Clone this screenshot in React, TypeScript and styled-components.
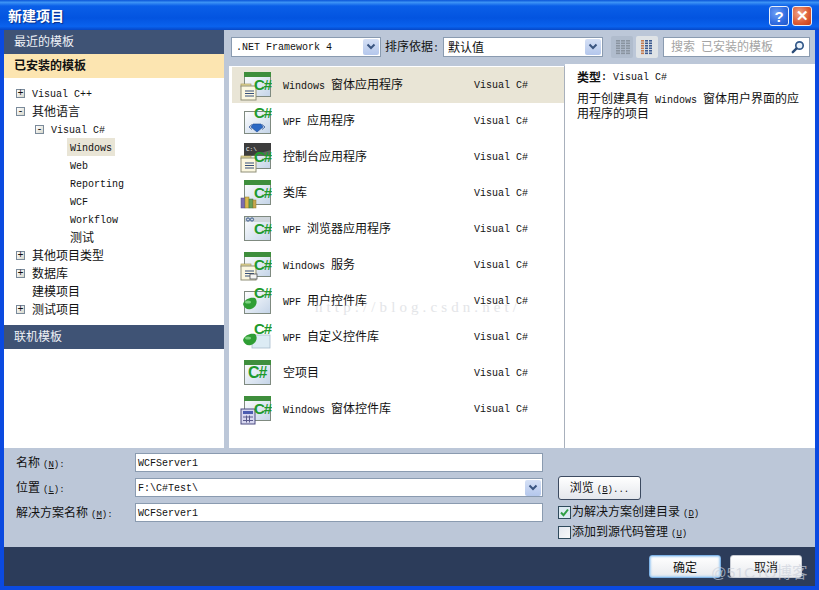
import {FC, ReactNode} from "react";
import styled, {createGlobalStyle} from "styled-components";

const Colors = {
  xpBlue: '#0a4fdc',
  panel: '#bcc7d8',
  header: '#3f5375',
  footer: '#2c3c5a',
  border: '#8a9bb0',
  selected: '#e9e5d6',
};

const GlobalStyle = createGlobalStyle`
  html, body {
    margin: 0;
    padding: 0;
    background: ${Colors.xpBlue};
  }
  * { box-sizing: border-box; }
`;

const Dialog = styled.div`
  position: relative;
  width: 819px;
  height: 590px;
  overflow: hidden;
  display: flex;
  flex-direction: column;
  color: #111;
  font-family: "Liberation Mono", "Noto Sans CJK SC", monospace;
  background: #0b4ae0;
`;

const TitleBar = styled.div`
  height: 30px;
  flex: none;
  display: flex;
  align-items: center;
  justify-content: space-between;
  padding: 2px 7px 0 8px;
  background: linear-gradient(180deg, #0a55d8 0%, #3c93f5 8%, #0a5fe8 20%, #0354e0 60%, #0a62ee 88%, #0547c8 100%);
`;

const TitleText = styled.div`
  margin-bottom: 2px;
  color: #fff;
  font: bold 14px "Noto Sans CJK SC", sans-serif;
  text-shadow: 1px 1px 1px #0b2f88;
`;

const CaptionButtons = styled.div`
  display: flex;
  gap: 3px;
`;

const CaptionButton = styled.div<{$close?: boolean}>`
  width: 20px;
  height: 20px;
  border: 1px solid #e8effa;
  border-radius: 3px;
  display: flex;
  align-items: center;
  justify-content: center;
  color: #fff;
  font: bold 15px "Liberation Sans", sans-serif;
  background: ${(props) => props.$close
    ? 'radial-gradient(circle at 35% 35%, #f0a58a, #dc5a32 60%, #c43c18)'
    : 'radial-gradient(circle at 35% 35%, #6fa0f5, #2f6be0 60%, #1f54c8)'};
`;

const Body = styled.div`
  flex: 1;
  display: flex;
  flex-direction: column;
  margin: 0 4px 4px;
  min-height: 0;
`;

const Columns = styled.div`
  height: 418px;
  flex: none;
  display: flex;
  background: ${Colors.panel};
`;

const LeftColumn = styled.div`
  width: 220px;
  flex: none;
  display: flex;
  flex-direction: column;
  background: #fff;
`;

const SectionHeader = styled.div<{$active?: boolean}>`
  height: 24px;
  flex: none;
  display: flex;
  align-items: center;
  padding: 0 0 2px 10px;
  font-size: 12px;
  font-weight: ${(props) => props.$active ? 'bold' : 'normal'};
  background: ${(props) => props.$active ? '#fce5b1' : Colors.header};
  color: ${(props) => props.$active ? '#111' : '#eef1f6'};
`;

const Tree = styled.div`
  height: 247px;
  flex: none;
  padding-top: 6px;
`;

const TreeRow = styled.div<{$indent: number}>`
  height: 18px;
  display: flex;
  align-items: center;
  padding-left: ${(props) => props.$indent}px;
`;

const Expander = styled.div`
  width: 9px;
  height: 9px;
  flex: none;
  margin-right: 7px;
  border: 1px solid #7a8a9a;
  background: linear-gradient(135deg, #fff, #d8d8cc);
  display: flex;
  align-items: center;
  justify-content: center;
  color: #111;
  font: 10px/7px "Liberation Mono", monospace;
`;

const Latin = styled.span`
  display: inline-block;
  padding-top: 2px;
  font-size: 10px;
  line-height: 12px;
  white-space: pre;
`;

const Cjk = styled.span`
  font-family: "Noto Sans CJK SC", sans-serif;
  font-size: 12px;
  line-height: 12px;
`;

const Key = styled.span`
  font-size: 9px;
  text-decoration: underline;
`;

const TreeLabel = styled.div<{$selected?: boolean}>`
  height: 18px;
  display: flex;
  align-items: center;
  padding: 0 3px;
  margin-left: -3px;
  background: ${(props) => props.$selected ? Colors.selected : 'transparent'};

  ${Latin} {
    padding-top: 4px;
  }
`;

const RightColumn = styled.div`
  flex: 1;
  display: flex;
  flex-direction: column;
  min-width: 0;
`;

const Toolbar = styled.div`
  height: 34px;
  flex: none;
  display: flex;
  align-items: center;
  padding: 0 5px 0 7px;
`;

const ComboBox = styled.div<{$width: number}>`
  width: ${(props) => props.$width}px;
  height: 20px;
  flex: none;
  display: flex;
  align-items: center;
  justify-content: space-between;
  padding: 0 1px 0 4px;
  background: #fff;
  border: 1px solid ${Colors.border};
`;

const ComboArrow = styled.div`
  width: 16px;
  height: 16px;
  flex: none;
  display: flex;
  align-items: center;
  justify-content: center;
  border-radius: 2px;
  background: linear-gradient(180deg, #d5e0f5, #b4c7ec);
`;

const ToolbarLabel = styled.div`
  margin: 0 4px;
  width: 54px;
  flex: none;
  white-space: nowrap;
`;

const ViewButton = styled.div<{$active?: boolean}>`
  width: 22px;
  height: 22px;
  flex: none;
  display: flex;
  align-items: center;
  justify-content: center;
  margin-left: ${(props) => props.$active ? 3 : 8}px;
  border-radius: 2px;
  background: ${(props) => props.$active ? '#dfe3e6' : '#b0bccd'};
`;

const SearchBox = styled.div`
  width: 147px;
  height: 20px;
  flex: none;
  margin-left: 5px;
  display: flex;
  align-items: center;
  justify-content: space-between;
  padding: 0 4px 0 7px;
  background: #fff;
  border: 1px solid ${Colors.border};
  color: #a4a4a4;
`;

const ContentRow = styled.div`
  flex: 1;
  display: flex;
  min-height: 0;
  padding-left: 5px;
`;

const TemplateList = styled.div`
  width: 336px;
  flex: none;
  margin-top: 2px;
  padding-top: 1px;
  background: #fff;
  border-right: 1px solid #a8b0bc;
`;

const TemplateRow = styled.div<{$selected?: boolean}>`
  height: 36px;
  display: flex;
  align-items: center;
  margin-left: 3px;
  padding-left: 8px;
  background: ${(props) => props.$selected ? Colors.selected : 'transparent'};
`;

const TemplateIcon = styled.svg`
  width: 32px;
  height: 32px;
  flex: none;
  margin-right: 11px;
`;

const TemplateName = styled.div`
  width: 191px;
  flex: none;
  white-space: nowrap;
`;

const DetailsPane = styled.div`
  flex: 1;
  background: #fff;
  padding: 5px 8px 0 12px;
  line-height: 12px;
`;

const DetailsType = styled.div`
  height: 16px;
  margin-bottom: 7px;
  display: flex;
  align-items: center;
  font-weight: bold;
`;

const DetailsLang = styled(Latin)`
  margin-left: 6px;
  font-weight: normal;
`;

const DetailsText = styled.div`
  line-height: 14px;
`;

const FormPanel = styled.div`
  height: 99px;
  flex: none;
  display: grid;
  grid-template-columns: 119px 408px 15px 1fr;
  grid-auto-rows: 25px;
  align-items: center;
  padding: 2px 0 0 12px;
  background: ${Colors.panel};
`;

const FormLabel = styled.div`
  white-space: nowrap;
`;

const TextField = styled.div`
  height: 19px;
  display: flex;
  align-items: center;
  justify-content: space-between;
  padding: 0 1px 0 2px;
  background: #fff;
  border: 1px solid ${Colors.border};
`;

const BrowseButton = styled.div`
  width: 83px;
  height: 24px;
  display: flex;
  align-items: center;
  justify-content: center;
  border: 1px solid #3c4a60;
  border-radius: 3px;
  background: linear-gradient(180deg, #fff, #e4e7ec);
`;

const CheckRow = styled.div`
  display: flex;
  align-items: center;
  gap: 1px;
  margin-top: -1px;
  white-space: nowrap;
`;

const CheckSecond = styled(CheckRow)`
  margin-top: -11px;
`;

const CheckBox = styled.div<{$checked?: boolean}>`
  width: 13px;
  height: 13px;
  flex: none;
  display: flex;
  align-items: center;
  justify-content: center;
  border: 1px solid #2f4a5c;
  background: ${(props) => props.$checked ? '#dceaf2' : 'linear-gradient(135deg, #e4e8f0, #f8f8f8)'};
`;

const Footer = styled.div`
  height: 39px;
  flex: none;
  display: flex;
  align-items: center;
  justify-content: flex-end;
  gap: 9px;
  padding-right: 13px;
  background: ${Colors.footer};
`;

const FooterButton = styled.div<{$primary?: boolean}>`
  width: 72px;
  height: 23px;
  display: flex;
  align-items: center;
  justify-content: center;
  border-radius: 3px;
  background: linear-gradient(180deg, #fff, #e8eaee);
  border: 1px solid ${(props) => props.$primary ? '#7fb4e8' : '#c8ccd4'};
  box-shadow: ${(props) => props.$primary ? 'inset 0 0 2px 1px #a8d0f4' : 'none'};
`;

const WatermarkBlog = styled.div`
  position: absolute;
  left: 315px;
  top: 299px;
  color: #c9ccd2;
  opacity: 0.5;
  font: 15px "Liberation Serif", serif;
  letter-spacing: 4.1px;
  pointer-events: none;
`;

const WatermarkLogo = styled.div`
  position: absolute;
  left: 711px;
  top: 560px;
  color: rgba(205, 210, 220, 0.7);
  font: 15.5px "Liberation Sans", "Noto Sans CJK SC", sans-serif;
  pointer-events: none;
`;

const HotkeyHint = styled.span`
  margin-left: 3px;
  font-size: 9px;
`;

// Latin runs are narrower than the CJK ones, as with a bitmap SimSun
const Txt: FC<{children: string}> = ({children}) => (
  <>
    {children.split(/([\u2E80-\u9FFF\uFF00-\uFFEF]+)/).map((part, i) =>
      i % 2 ? <Cjk key={i}>{part}</Cjk> : part && <Latin key={i}>{part}</Latin>
    )}
  </>
);

const Hotkey: FC<{label: string; hotkey: string; tail?: string}> = ({label, hotkey, tail}) => (
  <>
    <Txt>{label}</Txt>
    <HotkeyHint>(<Key>{hotkey}</Key>){tail}</HotkeyHint>
  </>
);

const Chevron: FC = () => (
  <svg width="10" height="8" viewBox="0 0 10 8">
    <path d="M1.5 1.5 L5 5 L8.5 1.5" fill="none" stroke="#3a5580" strokeWidth="2" />
  </svg>
);

type IconKind = 'forms' | 'wpf' | 'console' | 'lib' | 'browser' | 'service' | 'control' | 'custom' | 'empty' | 'calc';

const SmallDoc: FC = () => (
  <g>
    <rect x="1" y="15" width="10" height="3" fill="#e8dc98" stroke="#a89c60" strokeWidth="0.7" />
    <rect x="1" y="17" width="15" height="14" fill="#fbf7df" stroke="#8f8f78" strokeWidth="1" />
    <path d="M5 22h9M5 24.5h9M5 27h9" stroke="#36507c" strokeWidth="1.2" />
  </g>
);

const IconArt: FC<{kind: IconKind}> = ({kind}) => {
  const framed = kind !== 'custom';
  const greenTitle = kind === 'forms' || kind === 'lib' || kind === 'service' || kind === 'empty' || kind === 'calc';
  const highText = kind === 'wpf' || kind === 'control' || kind === 'custom';
  return (
    <TemplateIcon viewBox="0 0 32 32">
      <defs>
        <linearGradient id="winFill" x1="0" y1="0" x2="1" y2="1">
          <stop offset="0" stopColor="#ffffff" />
          <stop offset="1" stopColor="#c4d4e8" />
        </linearGradient>
      </defs>
      {framed && (
        <rect x="4.5" y={kind === 'wpf' || kind === 'control' ? 6.5 : 3.5} width="26" height={kind === 'wpf' || kind === 'control' ? 22 : 24}
          fill="url(#winFill)" stroke="#7f8a80" strokeWidth="1" />
      )}
      {greenTitle && <rect x="4" y="3" width="27" height="5" fill="#3e8e3c" />}
      {kind === 'console' && (
        <>
          <rect x="4" y="2" width="27" height="13" fill="#3c3c3c" />
          <path d="M10 15 L31 9 V15 Z" fill="#606860" />
          <text x="6" y="10" fontSize="6" fill="#fff" fontFamily="Liberation Mono">C:\</text>
          <SmallDoc />
        </>
      )}
      {kind === 'browser' && (
        <>
          <rect x="5" y="4" width="25" height="5" fill="#cfd6dc" />
          <circle cx="8" cy="6.5" r="1.6" fill="none" stroke="#3a5a8c" />
          <circle cx="12" cy="6.5" r="1.6" fill="none" stroke="#3a5a8c" />
        </>
      )}
      {kind === 'forms' && <SmallDoc />}
      {kind === 'service' && (
        <>
          <SmallDoc />
          <rect x="10" y="25" width="7" height="5" fill="#f4f4f4" stroke="#555" strokeWidth="0.8" />
        </>
      )}
      {kind === 'lib' && (
        <>
          <rect x="1" y="21" width="4" height="10" fill="#7a6cb0" stroke="#50447c" strokeWidth="0.5" />
          <rect x="5" y="20" width="4" height="11" fill="#d8b84c" stroke="#8f7828" strokeWidth="0.5" />
          <rect x="9" y="22" width="4" height="9" fill="#68a058" stroke="#3f7038" strokeWidth="0.5" />
          <rect x="13" y="23" width="3" height="8" fill="#c8a850" stroke="#8f7828" strokeWidth="0.5" />
        </>
      )}
      {kind === 'wpf' && (
        <>
          <path d="M9 22 L12 19.5 M9 22 L12 24.5 M25 22 L22 19.5 M25 22 L22 24.5" stroke="#5070a8" strokeWidth="1" fill="none" />
          <path d="M13 19 h8 l2 3 -6 5 -6 -5 z" fill="#2a68c4" stroke="#1c4a94" strokeWidth="0.6" />
        </>
      )}
      {(kind === 'control' || kind === 'custom') && (
        <>
          {kind === 'custom' && <rect x="12" y="14" width="18" height="13" fill="#dcebf4" stroke="#a8bccc" strokeWidth="0.8" />}
          <path d="M3 19 C5 14 10 12 15 13 C18 16 17 22 11 24 C7 25 4 23 3 19 Z" fill="#2f9e34" />
          <ellipse cx="8" cy="17" rx="3" ry="1.6" fill="#7cd080" />
        </>
      )}
      {kind === 'calc' && (
        <>
          <rect x="1" y="16" width="14" height="15" fill="#d8d8f0" stroke="#4a4a80" strokeWidth="1" />
          <rect x="3" y="18" width="10" height="3" fill="#4c5cb0" />
          <path d="M3 24h10M3 27.5h10M6.5 22.5v7M9.5 22.5v7" stroke="#5a5a8c" strokeWidth="1" />
        </>
      )}
      <text x={kind === 'empty' ? 8 : 14} y={highText ? 13 : 21}
        fontSize={kind === 'empty' ? 16 : 15} fontWeight="bold" letterSpacing="-1"
        fill="#1e9a2c" fontFamily="Liberation Sans">C#</text>
    </TemplateIcon>
  );
};

const Magnifier: FC = () => (
  <svg width="14" height="14" viewBox="0 0 14 14">
    <circle cx="8.5" cy="5.5" r="3.7" fill="#eaf2fa" stroke="#33598a" strokeWidth="1.7" />
    <path d="M5.6 8.4 L1.8 12.2" stroke="#2b4c78" strokeWidth="2.4" strokeLinecap="round" />
  </svg>
);

const ViewIcon: FC<{columns: number; colored?: boolean}> = ({columns, colored}) => {
  const cells: ReactNode[] = [];
  for (let c = 0; c < columns; c++) {
    for (let r = 0; r < 6; r++) {
      const x = colored ? (c === 0 ? 2 : 6 + (c - 1) * 4) : 2 + c * 5;
      cells.push(
        <rect key={`${c}-${r}`} x={x} y={1 + r * 2.5} width={colored ? 3 : 4} height="1.6"
          fill={colored && c === 0 ? '#c47b50' : colored ? '#3c5a90' : '#8a94a0'} />
      );
    }
  }
  return <svg width="16" height="16" viewBox="0 0 16 16">{cells}</svg>;
};

const Check: FC = () => (
  <svg width="11" height="11" viewBox="0 0 11 11">
    <path d="M2 5.5 L4.5 8.2 L9 2.5" fill="none" stroke="#2f9e44" strokeWidth="2" />
  </svg>
);

interface ITreeItem {
  label: string;
  indent: number;
  expander?: '+' | '-';
  selected?: boolean;
}

const treeItems: ITreeItem[] = [
  {label: 'Visual C++', indent: 12, expander: '+'},
  {label: '其他语言', indent: 12, expander: '-'},
  {label: 'Visual C#', indent: 31, expander: '-'},
  {label: 'Windows', indent: 66, selected: true},
  {label: 'Web', indent: 66},
  {label: 'Reporting', indent: 66},
  {label: 'WCF', indent: 66},
  {label: 'Workflow', indent: 66},
  {label: '测试', indent: 66},
  {label: '其他项目类型', indent: 12, expander: '+'},
  {label: '数据库', indent: 12, expander: '+'},
  {label: '建模项目', indent: 28},
  {label: '测试项目', indent: 12, expander: '+'},
];

const templates: {name: string; kind: IconKind}[] = [
  {name: 'Windows 窗体应用程序', kind: 'forms'},
  {name: 'WPF 应用程序', kind: 'wpf'},
  {name: '控制台应用程序', kind: 'console'},
  {name: '类库', kind: 'lib'},
  {name: 'WPF 浏览器应用程序', kind: 'browser'},
  {name: 'Windows 服务', kind: 'service'},
  {name: 'WPF 用户控件库', kind: 'control'},
  {name: 'WPF 自定义控件库', kind: 'custom'},
  {name: '空项目', kind: 'empty'},
  {name: 'Windows 窗体控件库', kind: 'calc'},
];

const App: FC = () => {
  return (
    <Dialog>
      <GlobalStyle />
      <TitleBar>
        <TitleText>新建项目</TitleText>
        <CaptionButtons>
          <CaptionButton>?</CaptionButton>
          <CaptionButton $close>✕</CaptionButton>
        </CaptionButtons>
      </TitleBar>
      <Body>
        <Columns>
          <LeftColumn>
            <SectionHeader>最近的模板</SectionHeader>
            <SectionHeader $active>已安装的模板</SectionHeader>
            <Tree>
              {treeItems.map((item) => (
                <TreeRow key={item.label + item.indent} $indent={item.indent}>
                  {item.expander && <Expander>{item.expander}</Expander>}
                  <TreeLabel $selected={item.selected}><Txt>{item.label}</Txt></TreeLabel>
                </TreeRow>
              ))}
            </Tree>
            <SectionHeader>联机模板</SectionHeader>
          </LeftColumn>
          <RightColumn>
            <Toolbar>
              <ComboBox $width={150}>
                <Latin>.NET Framework 4</Latin>
                <ComboArrow><Chevron /></ComboArrow>
              </ComboBox>
              <ToolbarLabel><Txt>排序依据:</Txt></ToolbarLabel>
              <ComboBox $width={160}>
                <Txt>默认值</Txt>
                <ComboArrow><Chevron /></ComboArrow>
              </ComboBox>
              <ViewButton><ViewIcon columns={3} /></ViewButton>
              <ViewButton $active><ViewIcon columns={3} colored /></ViewButton>
              <SearchBox>
                <span><Txt>搜索 已安装的模板</Txt></span>
                <Magnifier />
              </SearchBox>
            </Toolbar>
            <ContentRow>
              <TemplateList>
                {templates.map((template, i) => (
                  <TemplateRow key={template.name} $selected={i === 0}>
                    <IconArt kind={template.kind} />
                    <TemplateName><Txt>{template.name}</Txt></TemplateName>
                    <Latin>Visual C#</Latin>
                  </TemplateRow>
                ))}
              </TemplateList>
              <DetailsPane>
                <DetailsType><Txt>类型:</Txt><DetailsLang>Visual C#</DetailsLang></DetailsType>
                <DetailsText><Txt>用于创建具有 Windows 窗体用户界面的应用程序的项目</Txt></DetailsText>
              </DetailsPane>
            </ContentRow>
          </RightColumn>
        </Columns>
        <FormPanel>
          <FormLabel><Hotkey label="名称" hotkey="N" tail=":" /></FormLabel>
          <TextField><Latin>WCFServer1</Latin></TextField>
          <div />
          <div />
          <FormLabel><Hotkey label="位置" hotkey="L" tail=":" /></FormLabel>
          <TextField>
            <Latin>F:\C#Test\</Latin>
            <ComboArrow><Chevron /></ComboArrow>
          </TextField>
          <div />
          <BrowseButton><span><Hotkey label="浏览" hotkey="B" tail="..." /></span></BrowseButton>
          <FormLabel><Hotkey label="解决方案名称" hotkey="M" tail=":" /></FormLabel>
          <TextField><Latin>WCFServer1</Latin></TextField>
          <div />
          <CheckRow>
            <CheckBox $checked><Check /></CheckBox>
            <span><Hotkey label="为解决方案创建目录" hotkey="D" /></span>
          </CheckRow>
          <div />
          <div />
          <div />
          <CheckSecond>
            <CheckBox />
            <span><Hotkey label="添加到源代码管理" hotkey="U" /></span>
          </CheckSecond>
        </FormPanel>
        <Footer>
          <FooterButton $primary><Txt>确定</Txt></FooterButton>
          <FooterButton><Txt>取消</Txt></FooterButton>
        </Footer>
      </Body>
      <WatermarkBlog>http://blog.csdn.net/</WatermarkBlog>
      <WatermarkLogo>@51CTO博客</WatermarkLogo>
    </Dialog>
  );
}

export default App;
